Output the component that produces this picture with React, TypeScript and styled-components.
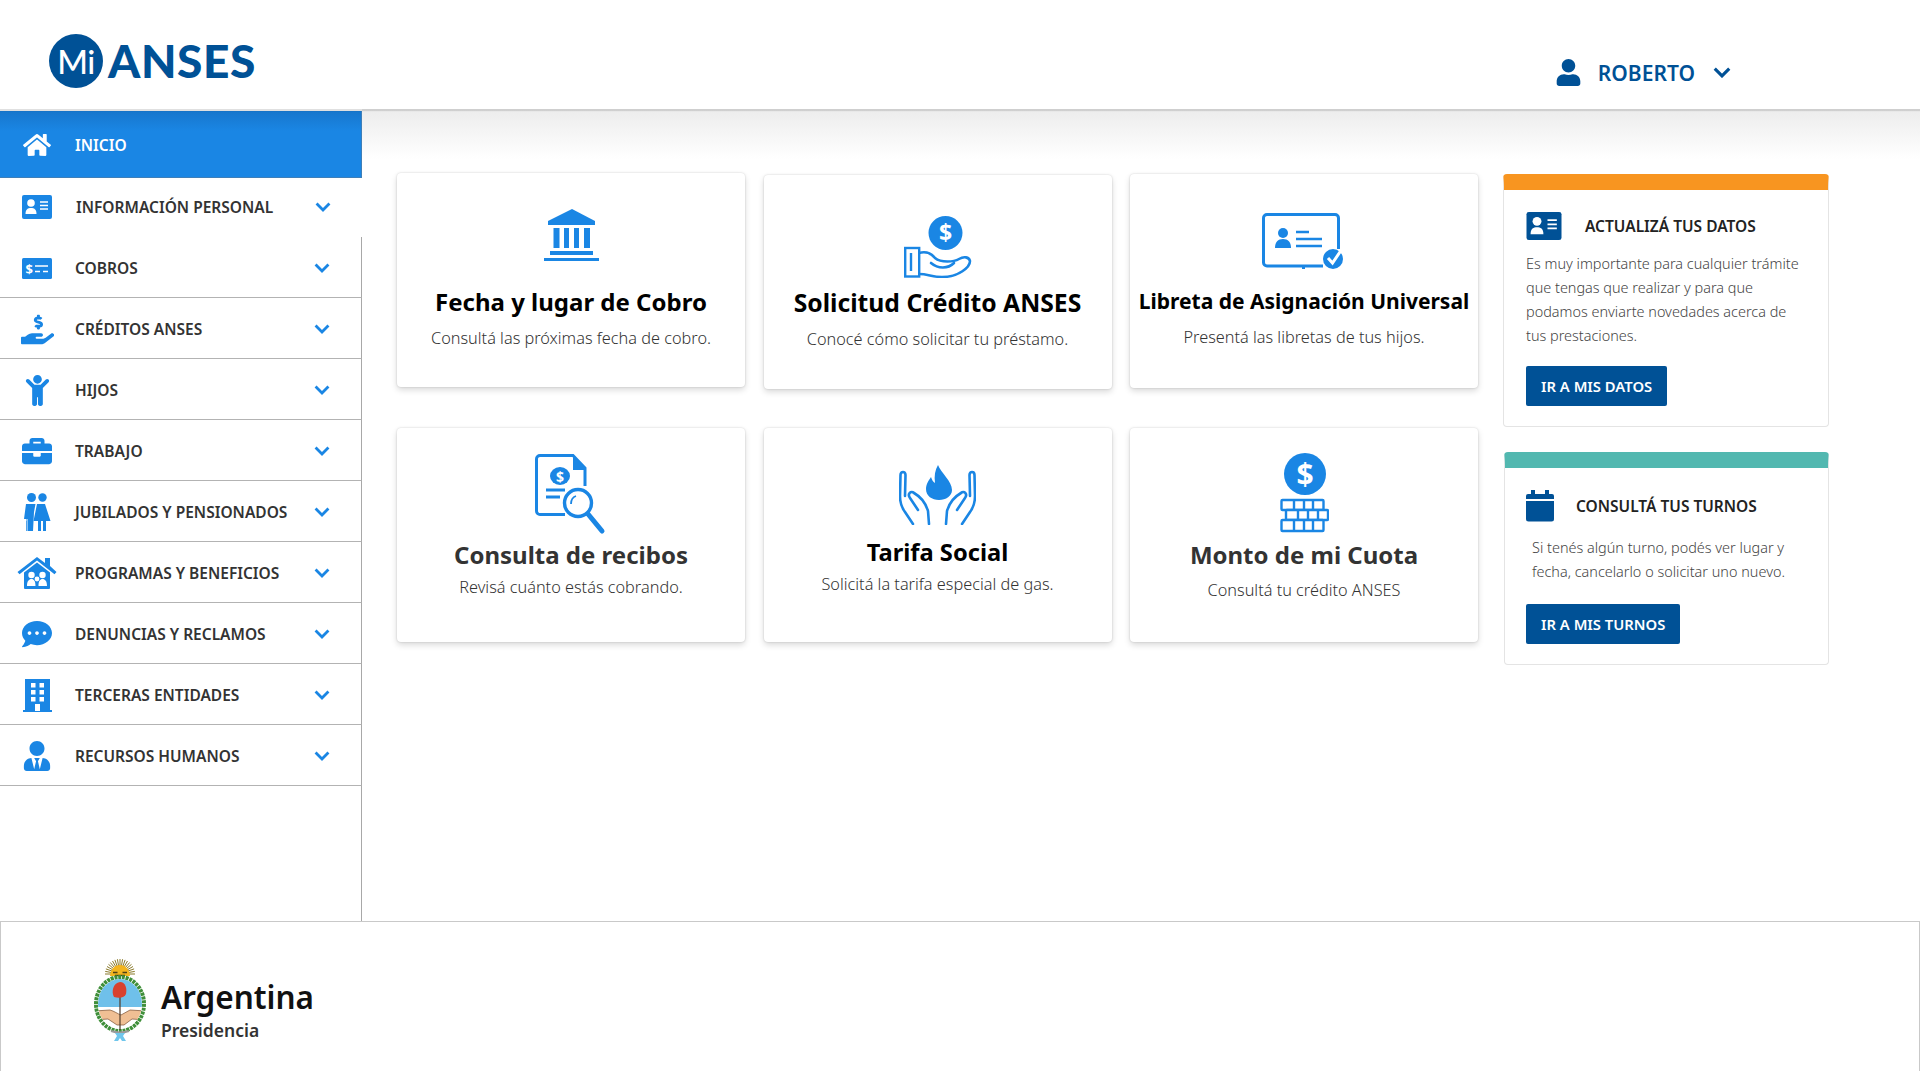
import React from 'react';
import styled, { createGlobalStyle } from 'styled-components';
import {
  FaHome,
  FaHandHoldingUsd,
  FaChild,
  FaBriefcase,
  FaCommentDots,
  FaUserTie,
  FaUser,
} from 'react-icons/fa';

const BLUE = '#1a86e4';
const NAVY = '#005196';
const FONT = '"Noto Sans", "Open Sans", sans-serif';

const GlobalStyle = createGlobalStyle`
  html, body {
    margin: 0;
    padding: 0;
    background: #fff;
    font-family: ${FONT};
  }
  * { box-sizing: border-box; }
`;

function Chevron({ color = BLUE, w = 16 }: { color?: string; w?: number }) {
  return (
    <svg width={w} height={w * 0.62} viewBox="0 0 16 10">
      <polyline points="1.5,1.5 8,8 14.5,1.5" fill="none" stroke={color} strokeWidth="2.8" />
    </svg>
  );
}

function IdIcon({ color = BLUE, w = 30, h = 24 }: { color?: string; w?: number; h?: number }) {
  return (
    <svg width={w} height={h} viewBox="0 0 30 24">
      <rect width="30" height="24" rx="2" fill={color} />
      <circle cx="9" cy="8" r="3.8" fill="#fff" />
      <path d="M3.5 19 C3.5 14 6 13 9 13 C12 13 14.5 14 14.5 19 Z" fill="#fff" />
      <path d="M18 7h8M18 10.5h8M18 14h8" stroke="#fff" strokeWidth="1.5" />
    </svg>
  );
}

function BillIcon() {
  return (
    <svg width="30" height="21" viewBox="0 0 30 21">
      <rect width="30" height="21" rx="1.5" fill={BLUE} />
      <text x="3.5" y="15.5" fontSize="13" fontWeight="700" fill="#fff" fontFamily={FONT}>$</text>
      <path d="M13 8h13M13 13.5h5M21 13.5h5" stroke="#fff" strokeWidth="1.6" />
    </svg>
  );
}

function ElderIcon() {
  return (
    <svg width="28" height="38" viewBox="0 0 28 38">
      <circle cx="8.5" cy="4.5" r="4.5" fill={BLUE} />
      <circle cx="19.5" cy="4.5" r="4.2" fill={BLUE} />
      <path d="M3 11 H12.5 L11 19 L10 38 H3 V26 H1 Z" fill={BLUE} />
      <path d="M2 26 h3 v12 h-1.5 v-10 h-1.5 Z" fill="#fff" opacity="0.5" />
      <path d="M14 11 H22 L27.5 28 H23 V38 H20 V28 H18 V38 H15 V28 H10.5 Z" fill={BLUE} />
    </svg>
  );
}

function FamilyHouseIcon() {
  return (
    <svg width="40" height="32" viewBox="0 0 40 32">
      <path d="M28 1 h5 v8 l6.500 6 -2 2.200 L20 3.500 2.500 17.200 0.500 15 20 0 28 6 Z" fill={BLUE} />
      <path d="M7 15.500 L20 5.500 33 15.500 V31 a1 1 0 0 1 -1 1 H8 a1 1 0 0 1 -1 -1 Z" fill={BLUE} />
      <circle cx="14.500" cy="18" r="3.200" fill="#fff" />
      <circle cx="25.500" cy="18" r="3.200" fill="#fff" />
      <circle cx="20" cy="22" r="2.400" fill="#fff" />
      <path d="M10 29 c0 -5 2 -7 4.500 -7 c2.500 0 4 2 4 7 Z M21.500 29 c0 -5 1.500 -7 4 -7 c2.500 0 4.500 2 4.500 7 Z" fill="#fff" />
    </svg>
  );
}

function BuildingIcon() {
  return (
    <svg width="29" height="33" viewBox="0 0 29 33">
      <rect x="2" y="0" width="25" height="31" fill={BLUE} />
      <rect x="0" y="31" width="29" height="2" fill={BLUE} />
      {[4, 11, 18].map((y) => (
        <React.Fragment key={y}>
          <rect x="8" y={y} width="4.500" height="4.500" fill="#fff" />
          <rect x="16.500" y={y} width="4.500" height="4.500" fill="#fff" />
        </React.Fragment>
      ))}
      <rect x="12" y="25" width="5" height="7" fill="#fff" />
    </svg>
  );
}

function BankIcon() {
  return (
    <svg width="55" height="52" viewBox="0 0 55 52">
      <path d="M28 0 L51 12 V16 H4 V12 Z" fill={BLUE} />
      <rect x="9.500" y="19" width="6" height="20" fill={BLUE} />
      <rect x="20" y="19" width="5" height="20" fill={BLUE} />
      <rect x="30" y="19" width="5" height="20" fill={BLUE} />
      <rect x="40" y="19" width="6" height="20" fill={BLUE} />
      <rect x="6" y="42" width="43" height="4" fill={BLUE} />
      <rect x="0" y="49" width="55" height="3" fill={BLUE} />
    </svg>
  );
}

function HandCoinIcon() {
  return (
    <svg width="68" height="62" viewBox="0 0 68 62">
      <circle cx="41.500" cy="17" r="17" fill={BLUE} />
      <text x="41.500" y="25" textAnchor="middle" fontSize="23" fontWeight="700" fill="#fff" fontFamily={FONT}>$</text>
      <rect x="1.200" y="32" width="14" height="28.500" fill="none" stroke={BLUE} strokeWidth="2.400" />
      <path d="M7 37 V55" stroke={BLUE} strokeWidth="2.400" />
      <path d="M15 37 C22 35 27 37 31 42 C37 47 50 46 55 43 C60 40 65 41 66 45 C66 51 55 61 38 61 C28 61 24 58 15 58" fill="none" stroke={BLUE} strokeWidth="2.600" />
      <path d="M27 47 C34 53 44 53 50 47" fill="none" stroke={BLUE} strokeWidth="2.600" strokeLinecap="round" />
    </svg>
  );
}

function ReceiptIcon() {
  return (
    <svg width="72" height="81" viewBox="0 0 72 81">
      <path d="M30 60.500 H5 a3.500 3.500 0 0 1 -3.500 -3.500 V5 a3.500 3.500 0 0 1 3.500 -3.500 H38 L50 14 V32" fill="none" stroke={BLUE} strokeWidth="3" />
      <path d="M38 1 L51 14 V16 H38 Z" fill={BLUE} />
      <ellipse cx="25" cy="22" rx="10" ry="9" fill={BLUE} />
      <text x="25" y="27.500" textAnchor="middle" fontSize="14" fontWeight="700" fill="#fff" fontFamily={FONT}>$</text>
      <path d="M11 36 H30 M11 43 H25" stroke={BLUE} strokeWidth="3" />
      <circle cx="43" cy="49" r="13.500" fill="#fff" stroke={BLUE} strokeWidth="3.400" />
      <path d="M36 50 C36 46 38 43 41 42" fill="none" stroke={BLUE} strokeWidth="1.800" />
      <path d="M53 60 L67 77" stroke={BLUE} strokeWidth="5" strokeLinecap="round" />
    </svg>
  );
}

function FlameHandsIcon() {
  return (
    <svg width="77" height="60" viewBox="0 0 77 60">
      <path d="M39 0 C42 8 53 16 53 25 C53 31 47 35 40 35 C33 35 27 31 27 24 C27 19 30 15 32 12 C33 15 34 17 36 18 C35 11 36 5 39 0 Z" fill={BLUE} />
      <g fill="none" stroke={BLUE} strokeWidth="2.600" strokeLinecap="round" strokeLinejoin="round">
        <path d="M6 31 L6.500 10 C6.500 6 1.500 6 1.500 10 L1 31 C1 38 3 43 6 47 L14 59" />
        <path d="M19 45 L11 33 C8 29 12 25 15 28 C22 32 27 39 29 46 L30 59" />
        <path d="M71 31 L70.500 10 C70.500 6 75.500 6 75.500 10 L76 31 C76 38 74 43 71 47 L63 59" />
        <path d="M58 45 L66 33 C69 29 65 25 62 28 C55 32 50 39 48 46 L47 59" />
      </g>
    </svg>
  );
}

function IdCheckIcon() {
  return (
    <svg width="84" height="57" viewBox="0 0 84 57">
      <path d="M61 53 H5 a3.500 3.500 0 0 1 -3.500 -3.500 V5 a3.500 3.500 0 0 1 3.500 -3.500 H73 a3.500 3.500 0 0 1 3.500 3.500 V36" fill="none" stroke={BLUE} strokeWidth="3" />
      <rect x="40" y="53" width="3" height="3" fill={BLUE} />
      <circle cx="21" cy="20" r="5" fill={BLUE} />
      <path d="M13 35 C13 29 16 26 21 26 C26 26 29 29 29 35 Z" fill={BLUE} />
      <path d="M34 19 H47 M34 26 H60 M34 33 H60" stroke={BLUE} strokeWidth="2.600" />
      <circle cx="71" cy="46" r="10" fill={BLUE} />
      <path d="M66 45 L70.500 50 L80 36" fill="none" stroke="#fff" strokeWidth="3" />
    </svg>
  );
}

function CoinBricksIcon() {
  return (
    <svg width="49" height="80" viewBox="0 0 49 80">
      <circle cx="25" cy="21" r="21" fill={BLUE} />
      <text x="25" y="31.500" textAnchor="middle" fontSize="30" fontWeight="700" fill="#fff" fontFamily={FONT}>$</text>
      <g fill="#fff" stroke={BLUE} strokeWidth="2.400">
        <rect x="1.500" y="47" width="42" height="10" rx="1" />
        <rect x="6" y="57" width="42" height="10" rx="1" />
        <rect x="1.500" y="67" width="42" height="11" rx="1" />
      </g>
      <path d="M14 47v10M24 47v10M33 47v10M18 57v10M28 57v10M38 57v10M14 67v10M24 67v10M33 67v10" stroke={BLUE} strokeWidth="2.400" />
    </svg>
  );
}

function CalendarIcon() {
  return (
    <svg width="28" height="32" viewBox="0 0 28 32">
      <rect x="5" y="0" width="4" height="5" fill={NAVY} />
      <rect x="19" y="0" width="4" height="5" fill={NAVY} />
      <path d="M0 6 a2 2 0 0 1 2 -2 H26 a2 2 0 0 1 2 2 V9 H0 Z" fill={NAVY} />
      <path d="M0 11 H28 V29 a2.500 2.500 0 0 1 -2.500 2.500 H2.500 a2.500 2.500 0 0 1 -2.500 -2.500 Z" fill={NAVY} />
    </svg>
  );
}

// simplified coat of arms for the footer logo
function ShieldLogo() {
  const rays = Array.from({ length: 19 }, (_, i) => -180 + i * 10);
  return (
    <svg width="52" height="84" viewBox="0 0 52 84">
      {rays.map((a) => (
        <line
          key={a}
          x1={26}
          y1={15}
          x2={26 + 15 * Math.cos((a * Math.PI) / 180)}
          y2={15 + 15 * Math.sin((a * Math.PI) / 180)}
          stroke="#8a7a2c"
          strokeWidth="1"
        />
      ))}
      <path d="M16 17 a10 11 0 0 1 20 0 Z" fill="#f3b51f" />
      <path d="M19 13.500 h4.500 M28.500 13.500 h4.500 M21 16.500 h10" stroke="#4d4218" strokeWidth="1.300" />
      <ellipse cx="26" cy="45" rx="24" ry="27" fill="#fff" stroke="#3f8f3a" strokeWidth="4" strokeDasharray="3 0.800" />
      <clipPath id="oval">
        <ellipse cx="26" cy="45" rx="22" ry="25" />
      </clipPath>
      <g clipPath="url(#oval)">
        <rect x="0" y="18" width="52" height="30" fill="#6fc0ea" />
        <rect x="0" y="48" width="52" height="30" fill="#fff" />
        <path d="M0 52 L16 51 C20 52 24 55 27 56 L36 51 L52 52 V61 L38 60 L30 66 H23 L14 60 L0 61 Z" fill="#f0bf94" stroke="#7a4f30" strokeWidth="0.700" />
      </g>
      <path d="M26 38 V71" stroke="#4f3a28" strokeWidth="1.200" />
      <path d="M20 38 C17 33 19 24 26 23 C32 23 33 30 32 35 C31 38 26 40 20 38 Z" fill="#d8412f" />
      <path d="M17 72 q9 3 18 0" fill="none" stroke="#9a9a9a" strokeWidth="2" />
      <path d="M21 74 h10 l-2 3 l3 5 h-4 l-2 -3 l-2 3 h-4 l3 -5 Z" fill="#6fc6ec" />
    </svg>
  );
}

const Page = styled.div`
  width: 1920px;
  height: 1071px;
  display: flex;
  flex-direction: column;
  overflow: hidden;
  background: #fff;
`;

const Header = styled.header`
  height: 109px;
  flex: none;
  display: flex;
  align-items: center;
  justify-content: space-between;
  padding: 0 189px 0 49px;
  background: #fff;
  position: relative;
  z-index: 2;
  box-shadow: 0 2px 1px rgba(0, 0, 0, 0.12);
`;

const Logo = styled.div`
  display: flex;
  align-items: center;
  gap: 5px;
  margin-top: 13px;
`;

const LogoBadge = styled.div`
  width: 54px;
  height: 54px;
  border-radius: 50%;
  background: ${NAVY};
  color: #fff;
  display: flex;
  align-items: center;
  justify-content: center;
  font: 500 33px/1 Lato, sans-serif;
  letter-spacing: -0.5px;
`;

const LogoWord = styled.div`
  color: ${NAVY};
  font: 900 46px/1 Lato, sans-serif;
  letter-spacing: 0.6px;
`;

const UserBox = styled.div`
  display: flex;
  align-items: center;
  margin-top: 36px;
  color: ${NAVY};
`;

const UserName = styled.span`
  margin: 0 18px 0 16px;
  font-size: 21px;
  font-weight: 600;
`;

const Body = styled.div`
  flex: 1;
  display: flex;
  min-height: 0;
`;

const Sidebar = styled.nav`
  width: 362px;
  flex: none;
  display: flex;
  flex-direction: column;
  margin-top: 2px;
`;

const NavRow = styled.div<{ $active?: boolean; $bare?: boolean }>`
  height: ${({ $active, $bare }) => ($active ? 67 : $bare ? 59 : 61)}px;
  flex: none;
  display: flex;
  align-items: center;
  padding: ${({ $bare }) => ($bare ? '0 31px 1px 0' : '2px 31px 0 0')};
  background: ${({ $active }) => ($active ? `linear-gradient(#1776cc, ${BLUE} 30%)` : '#fff')};
  border-bottom: ${({ $active, $bare }) => ($active ? '1px solid #3f7fb8' : $bare ? 'none' : '1px solid #b3b3b3')};
  border-right: ${({ $active, $bare }) => ($active ? '1px solid #3f7fb8' : $bare ? 'none' : '1px solid #a8a8a8')};
`;

const NavIcon = styled.span<{ $light?: boolean }>`
  width: 75px;
  flex: none;
  display: flex;
  justify-content: center;
  padding-right: 1px;
  color: ${({ $light }) => ($light ? '#fff' : BLUE)};
`;

const NavLabel = styled.span<{ $light?: boolean; $nudge?: boolean }>`
  flex: 1;
  padding-left: ${({ $nudge }) => ($nudge ? 1 : 0)}px;
  font-size: 15.5px;
  font-weight: 600;
  white-space: nowrap;
  color: ${({ $light }) => ($light ? '#fff' : '#333')};
`;

const SideFill = styled.div`
  flex: 1;
  border-right: 1px solid #a8a8a8;
`;

const Main = styled.main`
  flex: 1;
  display: flex;
  gap: 25px;
  align-items: flex-start;
  padding: 64px 0 0 35px;
  background: linear-gradient(#ececec, #fff 50px);
`;

const CardGrid = styled.div`
  width: 1081px;
  flex: none;
  display: grid;
  grid-template-columns: repeat(3, 348px);
  grid-template-rows: 214px 214px;
  column-gap: 18.5px;
  row-gap: 41px;
`;

const Card = styled.article<{ $pad: number; $shift?: number }>`
  height: 100%;
  display: flex;
  flex-direction: column;
  align-items: center;
  padding-top: ${({ $pad }) => $pad}px;
  margin-top: ${({ $shift }) => $shift ?? 0}px;
  background: #fff;
  border-radius: 4px;
  box-shadow: 0 0 2px rgba(0, 0, 0, 0.18), 0 3px 6px rgba(0, 0, 0, 0.15);
`;

const CardTitle = styled.h3<{ $gap: number; $soft?: boolean; $size?: number }>`
  margin: ${({ $gap }) => $gap}px 0 0;
  font-size: ${({ $size }) => $size ?? 24}px;
  line-height: 30px;
  font-weight: 700;
  white-space: nowrap;
  color: ${({ $soft }) => ($soft ? '#333' : '#000')};
`;

const CardText = styled.p<{ $gap: number }>`
  margin: ${({ $gap }) => $gap}px 0 0;
  font-size: 16.3px;
  line-height: 22px;
  font-weight: 300;
  white-space: nowrap;
  color: #333;
`;

const Aside = styled.aside`
  width: 326px;
  flex: none;
  display: flex;
  flex-direction: column;
`;

const Panel = styled.section<{ $accent: string; $top: number; $nudge?: number; $pad: string }>`
  margin-top: ${({ $top }) => $top}px;
  margin-left: ${({ $nudge }) => $nudge ?? 0}px;
  background: #fff;
  border: 1px solid #e4e4e4;
  border-top: 16px solid ${({ $accent }) => $accent};
  border-radius: 4px;
  padding: ${({ $pad }) => $pad};
`;

const PanelHead = styled.div<{ $gap: number }>`
  display: flex;
  align-items: center;
  gap: ${({ $gap }) => $gap}px;
`;

const PanelTitle = styled.h4`
  margin: 0;
  font-size: 15.5px;
  font-weight: 600;
  color: #222;
`;

const PanelText = styled.p<{ $indent?: number; $gap: number }>`
  margin: ${({ $gap }) => $gap}px 0 0;
  padding-left: ${({ $indent }) => $indent ?? 0}px;
  font-size: 14.45px;
  line-height: 24px;
  font-weight: 300;
  color: #444;
  white-space: nowrap;
`;

const PanelButton = styled.button<{ $gap: number }>`
  display: block;
  height: 40px;
  margin-top: ${({ $gap }) => $gap}px;
  padding: 0 15px;
  border: none;
  border-radius: 2px;
  background: ${NAVY};
  color: #fff;
  font: 600 14.8px ${FONT};
`;

const Footer = styled.footer`
  height: 150px;
  flex: none;
  display: flex;
  align-items: flex-start;
  gap: 15px;
  padding: 37px 0 0 93px;
  background: #fff;
  border: 1px solid #c9c9c9;
  border-bottom: none;
`;

const Brand = styled.div`
  display: flex;
  flex-direction: column;
  margin-top: 16px;
`;

const BrandName = styled.span`
  font-size: 31.5px;
  line-height: 44px;
  font-weight: 600;
  color: #111;
`;

const BrandSub = styled.span`
  font-size: 17.5px;
  line-height: 22px;
  font-weight: 600;
  color: #333;
`;

const navItems: { label: string; icon: React.ReactNode; bare?: boolean }[] = [
  { label: 'INFORMACIÓN PERSONAL', icon: <IdIcon />, bare: true },
  { label: 'COBROS', icon: <BillIcon /> },
  { label: 'CRÉDITOS ANSES', icon: <FaHandHoldingUsd size={33} /> },
  { label: 'HIJOS', icon: <FaChild size={31} /> },
  { label: 'TRABAJO', icon: <FaBriefcase size={30} /> },
  { label: 'JUBILADOS Y PENSIONADOS', icon: <ElderIcon /> },
  { label: 'PROGRAMAS Y BENEFICIOS', icon: <FamilyHouseIcon /> },
  { label: 'DENUNCIAS Y RECLAMOS', icon: <FaCommentDots size={30} /> },
  { label: 'TERCERAS ENTIDADES', icon: <BuildingIcon /> },
  { label: 'RECURSOS HUMANOS', icon: <FaUserTie size={30} /> },
];

const cards = [
  { title: 'Fecha y lugar de Cobro', text: 'Consultá las próximas fecha de cobro.', icon: <BankIcon />, pad: 36, gap: 26, textGap: 10 },
  { title: 'Solicitud Crédito ANSES', text: 'Conocé cómo solicitar tu préstamo.', icon: <HandCoinIcon />, pad: 41, gap: 10, textGap: 10, shift: 2, size: 24.7 },
  { title: 'Libreta de Asignación Universal', text: 'Presentá las libretas de tus hijos.', icon: <IdCheckIcon />, pad: 39, gap: 16, textGap: 10, shift: 1, size: 21 },
  { title: 'Consulta de recibos', text: 'Revisá cuánto estás cobrando.', icon: <ReceiptIcon />, pad: 26, gap: 5, textGap: 6, soft: true },
  { title: 'Tarifa Social', text: 'Solicitá la tarifa especial de gas.', icon: <FlameHandsIcon />, pad: 37, gap: 12, textGap: 6, size: 23.7 },
  { title: 'Monto de mi Cuota', text: 'Consultá tu crédito ANSES', icon: <CoinBricksIcon />, pad: 25, gap: 7, textGap: 9, soft: true },
];

export default function App() {
  return (
    <Page>
      <GlobalStyle />
      <Header>
        <Logo>
          <LogoBadge>Mi</LogoBadge>
          <LogoWord>ANSES</LogoWord>
        </Logo>
        <UserBox>
          <FaUser size={27} />
          <UserName>ROBERTO</UserName>
          <Chevron color={NAVY} w={18} />
        </UserBox>
      </Header>
      <Body>
        <Sidebar>
          <NavRow $active>
            <NavIcon $light>
              <FaHome size={28} />
            </NavIcon>
            <NavLabel $light>INICIO</NavLabel>
          </NavRow>
          {navItems.map((item) => (
            <NavRow key={item.label} $bare={item.bare}>
              <NavIcon>{item.icon}</NavIcon>
              <NavLabel $nudge={item.bare}>{item.label}</NavLabel>
              <Chevron />
            </NavRow>
          ))}
          <SideFill />
        </Sidebar>
        <Main>
          <CardGrid>
            {cards.map((c) => (
              <Card key={c.title} $pad={c.pad} $shift={c.shift}>
                {c.icon}
                <CardTitle $gap={c.gap} $soft={c.soft} $size={c.size}>{c.title}</CardTitle>
                <CardText $gap={c.textGap}>{c.text}</CardText>
              </Card>
            ))}
          </CardGrid>
          <Aside>
            <Panel $accent="#f89520" $top={1} $pad="22px 22px 20px">
              <PanelHead $gap={23}>
                <IdIcon color={NAVY} w={36} h={28} />
                <PanelTitle>ACTUALIZÁ TUS DATOS</PanelTitle>
              </PanelHead>
              <PanelText $gap={12}>
                Es muy importante para cualquier trámite
                <br />
                que tengas que realizar y para que
                <br />
                podamos enviarte novedades acerca de
                <br />
                tus prestaciones.
              </PanelText>
              <PanelButton $gap={18}>IR A MIS DATOS</PanelButton>
            </Panel>
            <Panel $accent="#52b8b0" $top={25} $nudge={1} $pad="22px 21px 20px">
              <PanelHead $gap={22}>
                <CalendarIcon />
                <PanelTitle>CONSULTÁ TUS TURNOS</PanelTitle>
              </PanelHead>
              <PanelText $indent={6} $gap={14}>
                Si tenés algún turno, podés ver lugar y
                <br />
                fecha, cancelarlo o solicitar uno nuevo.
              </PanelText>
              <PanelButton $gap={20}>IR A MIS TURNOS</PanelButton>
            </Panel>
          </Aside>
        </Main>
      </Body>
      <Footer>
        <ShieldLogo />
        <Brand>
          <BrandName>Argentina</BrandName>
          <BrandSub>Presidencia</BrandSub>
        </Brand>
      </Footer>
    </Page>
  );
}
